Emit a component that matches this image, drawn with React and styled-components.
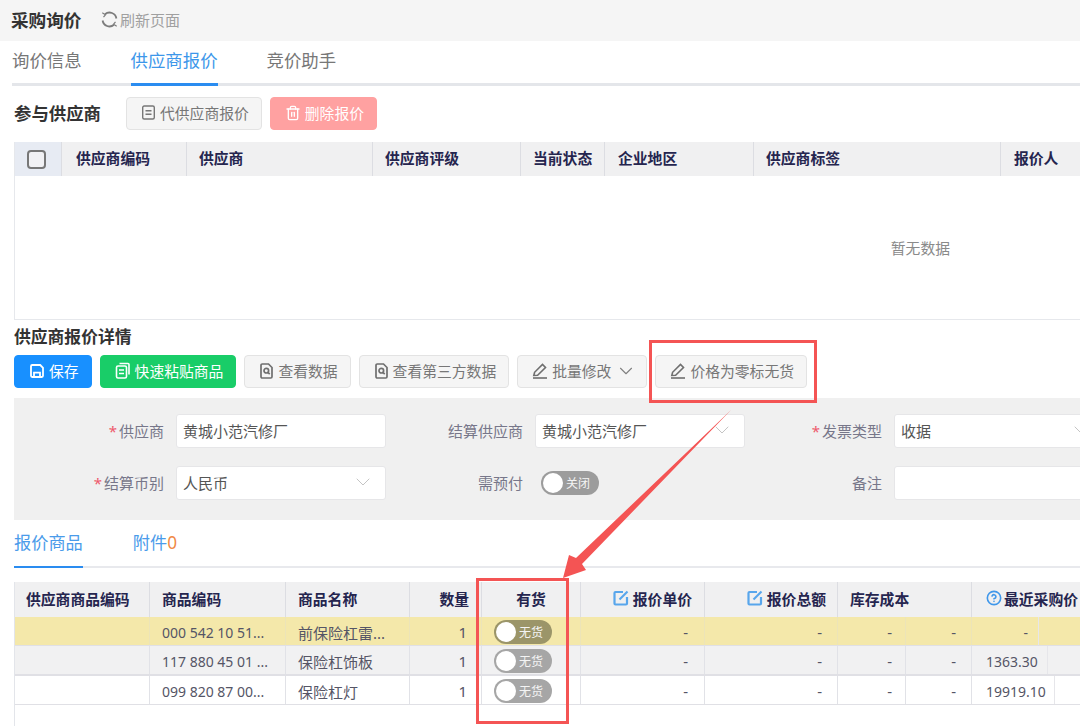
import React from 'react'
import styled, { createGlobalStyle } from 'styled-components'
import { ChevronDown, CircleHelp, Trash2 } from 'lucide-react'

const GlobalStyle = createGlobalStyle`
  html, body { margin: 0; padding: 0; background: #fff; }
  * { box-sizing: border-box; }
  body { font-family: "Noto Sans", "Noto Sans CJK SC", sans-serif; }
  svg { flex-shrink: 0; }
`;

const Page = styled.div`
  position: relative;
  width: 1080px;
  height: 726px;
  overflow: hidden;
  background: #fff;
  color: #555;
  font-size: 15px;
`;

const TopBar = styled.div`
  display: flex;
  align-items: center;
  height: 41px;
  padding: 0 0 2px 11px;
  background: #f5f5f5;
`;

const PageTitle = styled.div`
  width: 90px;
  font-size: 17.6px;
  font-weight: 700;
  color: #333;
`;

const Refresh = styled.div`
  display: flex;
  align-items: center;
  gap: 2px;
  color: #a0a0a0;
  font-size: 15px;
`;

const MainTabs = styled.div`
  display: flex;
  gap: 49px;
  height: 45px;
  margin-left: 12px;
  border-bottom: 3px solid #e4e6ea;
`;

const MainTab = styled.div`
  height: 45px;
  line-height: 39px;
  font-size: 17.4px;
  color: ${p => (p.$active ? '#3d97ea' : '#777')};
  border-bottom: 3px solid ${p => (p.$active ? '#2a8cf0' : 'transparent')};
`;

const SectionHead = styled.div`
  display: flex;
  align-items: center;
  height: 33px;
  margin: 11px 0 12px 14px;
`;

const SectionTitle = styled.div`
  width: 112px;
  padding-bottom: 2px;
  font-size: 17.4px;
  font-weight: 700;
  color: #333;
`;

const ButtonRow = styled.div`
  display: flex;
  gap: 8px;
  height: 33px;
`;

const DetailButtons = styled(ButtonRow)`
  margin-left: 14px;
`;

const Button = styled.div`
  display: flex;
  align-items: center;
  gap: 4px;
  height: 33px;
  padding: 0 12px 2px 14px;
  border-radius: 4px;
  font-size: 14.8px;
  white-space: nowrap;
  border: 1px solid ${p => p.$border || '#e3e3e3'};
  background: ${p => p.$bg || '#f5f5f5'};
  color: ${p => p.$color || '#777'};
`;

const SupplierTable = styled.div`
  margin-left: 14px;
  border-left: 1px solid #e6e8ec;
  border-bottom: 1px solid #e6e8ec;
`;

const SupplierHead = styled.div`
  display: grid;
  grid-template-columns: 47px 125px 186px 148px 84px 149px 247px 80px;
  height: 34px;
  background: #f0f0f1;
`;

const HeadCell = styled.div`
  display: flex;
  align-items: center;
  gap: ${p => p.$gap || 4}px;
  min-width: 0;
  padding: 0 ${p => p.$pad || 12}px 3px;
  justify-content: ${p => p.$align || 'flex-start'};
  border-right: 1px solid #dcdde2;
  font-weight: 700;
  font-size: 14.8px;
  color: #25254f;
  white-space: nowrap;
`;

const CheckCell = styled.div`
  display: flex;
  align-items: center;
  justify-content: center;
  padding-right: 3px;
  background: #e7ebf3;
  border-right: 1px solid #dcdde2;
`;

const CheckBox = styled.div`
  width: 19px;
  height: 19px;
  border: 2px solid #777;
  border-radius: 4px;
  background: #f1f1f4;
`;

const EmptyBody = styled.div`
  display: flex;
  align-items: center;
  justify-content: flex-end;
  height: 143px;
  padding: 0 130px 0 0;
  color: #8a8a8a;
  font-size: 14.8px;
`;

const DetailTitle = styled.div`
  height: 35px;
  margin-left: 14px;
  line-height: 33px;
  font-size: 16.8px;
  font-weight: 700;
  color: #333;
`;

const FormPanel = styled.div`
  display: grid;
  grid-template-columns: 162px 210px 149px 210px 149px 210px;
  grid-auto-rows: 34px;
  row-gap: 18px;
  align-items: center;
  height: 122px;
  margin: 10px 0 0 14px;
  padding-top: 16px;
  background: #f0f0f0;
`;

const Label = styled.div`
  padding: 0 12px 2px 0;
  text-align: right;
  color: #77778a;
  white-space: nowrap;
`;

const Star = styled.span`
  margin-right: 2px;
  color: #ee5a6c;
`;

const Field = styled.div`
  display: flex;
  align-items: center;
  justify-content: space-between;
  height: 34px;
  padding: 0 10px 2px 6px;
  border: 1px solid #e6e6e8;
  border-radius: 3px;
  background: #fff;
  color: #555;
`;

const Toggle = styled.div`
  display: flex;
  align-items: center;
  width: 58px;
  height: 24px;
  padding: 0 2px;
  gap: 3px;
  border-radius: 12px;
  background: ${p => p.$bg || '#a3a3a3'};
  color: #f4f4f4;
  font-size: 12px;
`;

const FormToggle = styled(Toggle)`
  margin-left: 6px;
`;

const Knob = styled.span`
  width: 20px;
  height: 20px;
  border-radius: 50%;
  background: #fff;
`;

const SubTabs = styled.div`
  display: flex;
  gap: 50px;
  height: 48px;
  margin-left: 14px;
  border-bottom: 2px solid #e8e9ed;
`;

const SubTab = styled.div`
  height: 48px;
  line-height: 45px;
  font-size: 17.2px;
  color: #4a9bea;
  border-bottom: 2px solid ${p => (p.$active ? '#2a8cf0' : 'transparent')};
`;

const Count = styled.span`
  color: #f08a46;
`;

const QuoteTable = styled.div`
  height: 144px;
  margin: 14px 0 0 14px;
  border-left: 1px solid #e3e5ea;
`;

const columns = '135px 136px 124px 72px 99px 124px 133px 68px 66px 200px';

const QuoteHead = styled.div`
  display: grid;
  grid-template-columns: ${columns};
  height: 35px;
  background: #f0f0f1;
`;

const HeadSpan = styled(HeadCell)`
  grid-column: span 2;
`;

const Row = styled.div`
  display: grid;
  grid-template-columns: ${columns};
  height: ${p => p.$h || 29}px;
  background: ${p => p.$bg || '#fff'};
  border-bottom: ${p => p.$rule || 1}px solid #e0e0e5;
`;

const Cell = styled.div`
  display: flex;
  align-items: center;
  justify-content: ${p => p.$align || 'flex-start'};
  min-width: 0;
  padding: 2px ${p => p.$pad || 12}px 0;
  border-right: 1px solid ${p => p.$line || '#e1e2e7'};
  color: #555566;
  white-space: nowrap;
  overflow: hidden;
`;

const CodeCell = styled(Cell)`
  font-size: 14px;
`;

const Recent = styled.div`
  display: flex;
  align-items: center;
  min-width: 0;
`;

const RecentValue = styled.div`
  display: flex;
  align-items: center;
  justify-content: ${p => p.$align || 'flex-start'};
  width: ${p => p.$w}px;
  height: 100%;
  padding: 2px 10px 0 14px;
  border-right: 1px solid #e6e6ea;
  color: #555566;
  font-size: 14px;
`;

const ButtonChevron = styled(ChevronDown)`
  margin-right: -3px;
`;

const MarkBox = styled.div`
  position: absolute;
  pointer-events: none;
  border: 3px solid #f45454;
`;

const ButtonMark = styled(MarkBox)`
  left: 649px;
  top: 340px;
  width: 168px;
  height: 63px;
`;

const ColumnMark = styled(MarkBox)`
  left: 476px;
  top: 578px;
  width: 93px;
  height: 146px;
`;

const Arrow = styled.svg`
  position: absolute;
  left: 0;
  top: 0;
  pointer-events: none;
`;

const RefreshIcon = () => (
  <svg width="17" height="17" viewBox="0 0 17 17" fill="none" stroke="#7c7c7c" strokeWidth="1.8">
    <path d="M4 3.200A7 7 0 0 1 15.400 7.500" />
    <path d="M13 13.800A7 7 0 0 1 1.600 9.500" />
    <path d="M1.300 1.800L4.400 3.800 2.500 6.200" strokeWidth="1.200" />
    <path d="M15.700 15.200L12.600 13.200 14.500 10.800" strokeWidth="1.200" />
  </svg>
)

const Doc = ({ color = '#777' }) => (
  <svg width="15" height="15" viewBox="0 0 15 15" fill="none" stroke={color} strokeWidth="1.4">
    <rect x="1.700" y="1" width="11.600" height="13" rx="1.500" />
    <path d="M4.500 5.700h6M4.500 9.300h6" />
  </svg>
)

const SaveIcon = () => (
  <svg width="16" height="16" viewBox="0 0 16 16" fill="none" stroke="#fff" strokeWidth="1.800">
    <path d="M2 3.200C2 2.500 2.500 2 3.200 2h8L14 4.800v8c0 .7-.5 1.200-1.200 1.200H3.200C2.500 14 2 13.500 2 12.800z" />
    <path d="M5 14V9.700h6V14" />
  </svg>
)

const CopyIcon = () => (
  <svg width="16" height="17" viewBox="0 0 16 17" fill="none" stroke="#fff" strokeWidth="1.600">
    <rect x="1.500" y="4" width="10" height="12" rx="1.500" />
    <path d="M4.500 1.500h8.500c.6 0 1 .4 1 1v10M4 8h5M4 11.500h5" />
  </svg>
)

const SearchDoc = () => (
  <svg width="15" height="16" viewBox="0 0 15 16" fill="none" stroke="#6f6f6f" strokeWidth="1.700">
    <path d="M2 2.200C2 1.500 2.500 1 3.200 1h6.300L13 4.500v9.300c0 .7-.5 1.200-1.200 1.200H3.200C2.500 15 2 14.500 2 13.800z" />
    <circle cx="7.300" cy="7.700" r="2.300" />
    <path d="M9 9.500l1.700 1.700" />
  </svg>
)

const EditLine = () => (
  <svg width="16" height="16" viewBox="0 0 16 16" fill="none" stroke="#6f6f6f" strokeWidth="1.600">
    <path d="M1.800 12.500l.8-3.200L10.500 1.500l3 3-7.900 7.800z" />
    <path d="M1 15h14" />
  </svg>
)

const BlueEdit = () => (
  <svg width="16" height="16" viewBox="0 0 16 16" fill="none" stroke="#58a6ec" strokeWidth="2.200">
    <path d="M10 2H2.500C2 2 1.500 2.500 1.500 3v10.500c0 .5.500 1 1 1h10.500c.5 0 1-.5 1-1V7" />
    <path d="M6.500 9.500L14.500 1.500" />
  </svg>
)

const Chevron = () => <ChevronDown size={24} strokeWidth={0.9} color="#bdbdbd" />

const Switch = ({ bg }) => (
  <Toggle $bg={bg}>
    <Knob />
    无货
  </Toggle>
)

const rows = [
  { bg: '#f4e8aa', line: '#ece4b8', code: '000 542 10 51...', name: '前保险杠雷...', sw: '#9b9569', h: 29, rule: 1, recent: '-', w: 67, align: 'flex-end' },
  { bg: '#f1f1f2', code: '117 880 45 01 ...', name: '保险杠饰板', sw: '#a6a6a6', h: 30, rule: 2, recent: '1363.30', w: 76 },
  { bg: '#fff', code: '099 820 87 00...', name: '保险杠灯', sw: '#a6a6a6', h: 29, rule: 1, recent: '19919.10', w: 83 },
]

function App() {
  return (
    <Page>
      <GlobalStyle />
      <TopBar>
        <PageTitle>采购询价</PageTitle>
        <Refresh>
          <RefreshIcon />
          刷新页面
        </Refresh>
      </TopBar>

      <MainTabs>
        <MainTab>询价信息</MainTab>
        <MainTab $active>供应商报价</MainTab>
        <MainTab>竞价助手</MainTab>
      </MainTabs>

      <SectionHead>
        <SectionTitle>参与供应商</SectionTitle>
        <ButtonRow>
          <Button><Doc />代供应商报价</Button>
          <Button $bg="#ffa1a1" $border="#ffa1a1" $color="#fff">
            <Trash2 size={16} strokeWidth={2} color="#fff" />删除报价
          </Button>
        </ButtonRow>
      </SectionHead>

      <SupplierTable>
        <SupplierHead>
          <CheckCell><CheckBox /></CheckCell>
          <HeadCell $pad={14}>供应商编码</HeadCell>
          <HeadCell>供应商</HeadCell>
          <HeadCell>供应商评级</HeadCell>
          <HeadCell>当前状态</HeadCell>
          <HeadCell $pad={13}>企业地区</HeadCell>
          <HeadCell>供应商标签</HeadCell>
          <HeadCell $pad={13}>报价人</HeadCell>
        </SupplierHead>
        <EmptyBody>暂无数据</EmptyBody>
      </SupplierTable>

      <DetailTitle>供应商报价详情</DetailTitle>
      <DetailButtons>
        <Button $bg="#1890ff" $border="#1890ff" $color="#fff"><SaveIcon />保存</Button>
        <Button $bg="#19cd68" $border="#19cd68" $color="#fff"><CopyIcon />快速粘贴商品</Button>
        <Button><SearchDoc />查看数据</Button>
        <Button><SearchDoc />查看第三方数据</Button>
        <Button><EditLine />批量修改<ButtonChevron size={22} strokeWidth={1.2} color="#808080" /></Button>
        <Button><EditLine />价格为零标无货</Button>
      </DetailButtons>

      <FormPanel>
        <Label><Star>*</Star>供应商</Label>
        <Field>黄城小范汽修厂</Field>
        <Label>结算供应商</Label>
        <Field>黄城小范汽修厂<Chevron /></Field>
        <Label><Star>*</Star>发票类型</Label>
        <Field>收据<Chevron /></Field>
        <Label><Star>*</Star>结算币别</Label>
        <Field>人民币<Chevron /></Field>
        <Label>需预付</Label>
        <FormToggle $bg="#9c9c9c"><Knob />关闭</FormToggle>
        <Label>备注</Label>
        <Field />
      </FormPanel>

      <SubTabs>
        <SubTab $active>报价商品</SubTab>
        <SubTab>附件<Count>0</Count></SubTab>
      </SubTabs>

      <QuoteTable>
        <QuoteHead>
          <HeadCell $pad={11}>供应商商品编码</HeadCell>
          <HeadCell>商品编码</HeadCell>
          <HeadCell>商品名称</HeadCell>
          <HeadCell $align="flex-end" $pad={12}>数量</HeadCell>
          <HeadCell $align="center">有货</HeadCell>
          <HeadCell $align="flex-end" $pad={12}><BlueEdit />报价单价</HeadCell>
          <HeadCell $align="flex-end" $pad={11}><BlueEdit />报价总额</HeadCell>
          <HeadSpan>库存成本</HeadSpan>
          <HeadCell $pad={14} $gap={2}>
            <CircleHelp size={16} strokeWidth={2.4} color="#3f97ea" />最近采购价
          </HeadCell>
        </QuoteHead>
        {rows.map(r => (
          <Row key={r.code} $bg={r.bg} $h={r.h} $rule={r.rule}>
            <Cell $line={r.line} />
            <CodeCell $line={r.line}>{r.code}</CodeCell>
            <Cell $line={r.line}>{r.name}</Cell>
            <Cell $line={r.line} $align="flex-end" $pad={14}>1</Cell>
            <Cell $line={r.line}><Switch bg={r.sw} /></Cell>
            <Cell $line={r.line} $align="flex-end" $pad={16}>-</Cell>
            <Cell $line={r.line} $align="flex-end" $pad={15}>-</Cell>
            <Cell $line={r.line} $align="flex-end" $pad={13}>-</Cell>
            <Cell $line={r.line} $align="flex-end" $pad={15}>-</Cell>
            <Recent>
              <RecentValue $w={r.w} $align={r.align}>{r.recent}</RecentValue>
            </Recent>
          </Row>
        ))}
      </QuoteTable>

      <ButtonMark />
      <ColumnMark />
      <Arrow width="1080" height="726" viewBox="0 0 1080 726">
        <polygon points="731,410 582,564 586,570 563,578 569,555 576,558" fill="#f45454" />
      </Arrow>
    </Page>
  )
}

export default App
